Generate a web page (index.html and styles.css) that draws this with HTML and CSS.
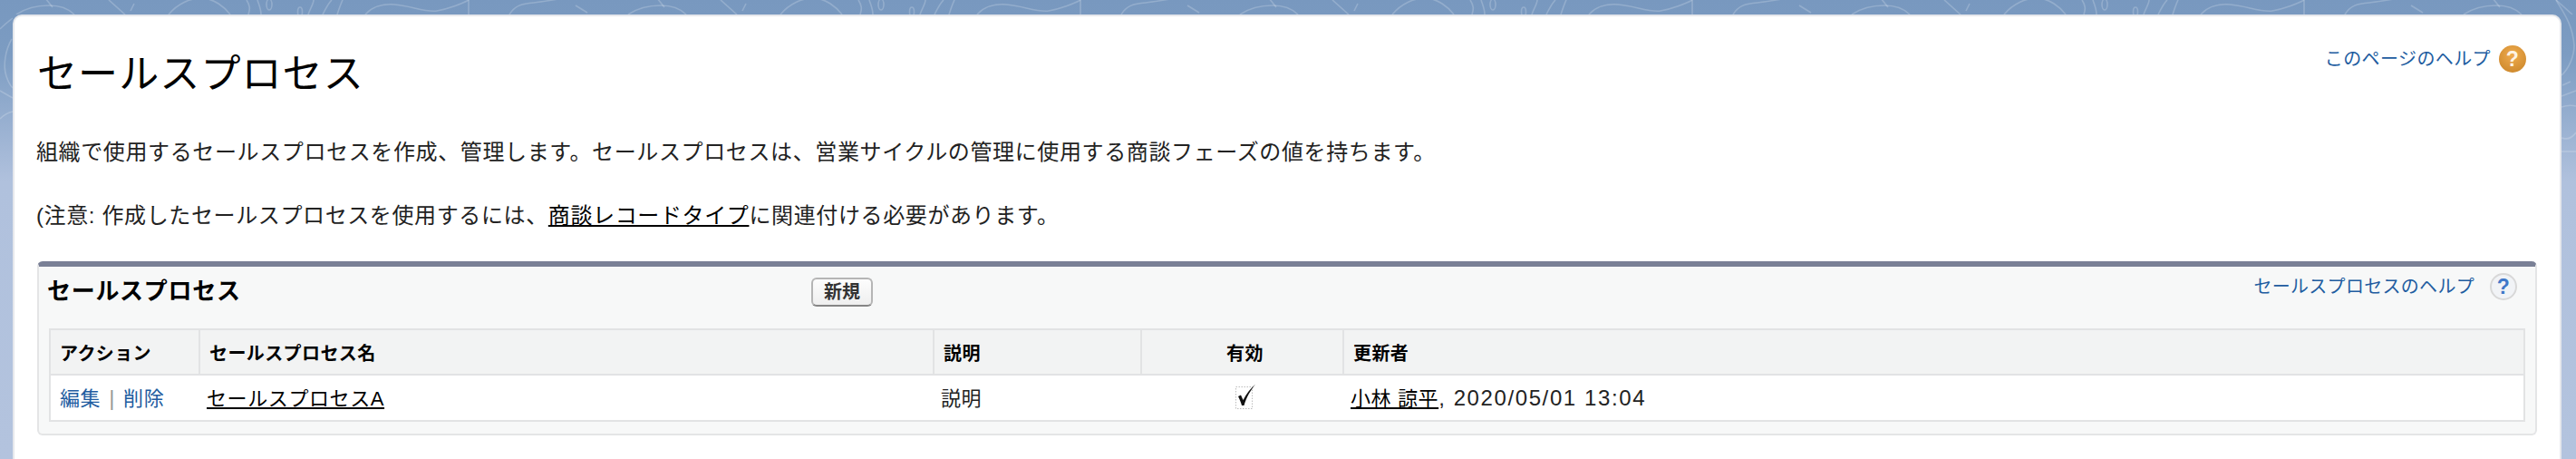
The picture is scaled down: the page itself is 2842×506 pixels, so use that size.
FILE: index.html
```html
<!DOCTYPE html>
<html lang="ja">
<head>
<meta charset="utf-8">
<title>セールスプロセス</title>
<link rel="stylesheet" href="styles.css">
</head>
<body>
<svg class="backdrop" viewBox="0 0 2842 506" aria-hidden="true">
  <defs>
    <pattern id="swirl" patternUnits="userSpaceOnUse" x="0" y="0" width="675" height="16">
      <g fill="none" stroke="#ffffff" stroke-opacity=".2" stroke-width="1.6">
        <path d="M18 16C30 8 42 6 54 6C66 6 76 10 82 16"/>
        <path d="M50 -2L58 8M120 0L138 16M148 4L144 12"/>
        <path d="M186 16C196 4 210 -2 222 -2C236 -2 248 8 254 16"/>
        <path d="M272 0C276 6 276 10 274 16M284 0C286 6 288 10 288 16"/>
        <ellipse cx="297" cy="5" rx="3" ry="6"/>
        <ellipse cx="331" cy="13" rx="2.5" ry="5"/>
        <path d="M340 16C342 10 346 4 346 0M356 16C360 8 362 4 366 0M372 16C374 10 376 4 378 0"/>
        <path d="M403 16C410 8 422 4 435 5C452 6 470 14 482 12C494 10 510 4 517 0"/>
        <path d="M517 0V16"/>
        <path d="M562 16C568 6 576 4 589 3C600 2 608 0 616 -1"/>
        <path d="M635 6L648 14"/>
      </g>
    </pattern>
  </defs>
  <rect x="0" y="0" width="2842" height="16" fill="url(#swirl)"/>
  <g fill="none" stroke="#ffffff" stroke-opacity=".2" stroke-width="1.6">
    <path d="M0 32C5 27 9 24 14 20"/>
    <path d="M13 43C6 55 3 72 7 84C9 90 11 94 14 97"/>
    <path d="M0 100L14 108"/>
    <path d="M0 131C4 127 9 124 14 123"/>
    <path d="M2820 0C2828 14 2838 26 2840 50C2840 62 2834 76 2826 83"/>
    <path d="M2827 94L2836 90"/>
    <path d="M2826 106L2842 100"/>
    <path d="M2826 118C2832 116 2838 116 2842 117"/>
    <path d="M2826 152C2832 154 2838 152 2842 146"/>
    <path d="M2826 167H2842"/>
  </g>
</svg>
<main class="card">
  <header class="page-head">
    <h1 class="page-title">セールスプロセス</h1>
    <a class="page-help">このページのヘルプ
      <svg class="help-icon" viewBox="0 0 30 30" aria-hidden="true">
        <defs>
          <radialGradient id="orange" cx="50%" cy="35%" r="65%">
            <stop offset="0" stop-color="#f0ac4e"/>
            <stop offset="1" stop-color="#cf8a2e"/>
          </radialGradient>
        </defs>
        <circle cx="15" cy="15" r="15" fill="url(#orange)"/>
        <text x="15" y="23" text-anchor="middle" class="help-mark help-mark-white">?</text>
      </svg>
    </a>
  </header>
  <p class="intro">組織で使用するセールスプロセスを作成、管理します。セールスプロセスは、営業サイクルの管理に使用する商談フェーズの値を持ちます。</p>
  <p class="note">(注意: 作成したセールスプロセスを使用するには、<a class="plain-link">商談レコードタイプ</a>に関連付ける必要があります。</p>
  <section class="panel">
    <div class="panel-head">
      <h2 class="panel-title">セールスプロセス</h2>
      <button class="btn" type="button">新規</button>
      <a class="panel-help">セールスプロセスのヘルプ
        <svg class="help-icon" viewBox="0 0 30 30" aria-hidden="true">
          <circle cx="15" cy="15" r="14" fill="#f1f3f6" stroke="#d8d8d8" stroke-width="2"/>
          <text x="15" y="23" text-anchor="middle" class="help-mark help-mark-blue">?</text>
        </svg>
      </a>
    </div>
    <table class="list">
      <colgroup>
        <col class="c-action"><col class="c-name"><col class="c-desc"><col class="c-active"><col>
      </colgroup>
      <thead>
        <tr>
          <th>アクション</th>
          <th>セールスプロセス名</th>
          <th>説明</th>
          <th class="center">有効</th>
          <th>更新者</th>
        </tr>
      </thead>
      <tbody>
        <tr>
          <td class="cell-action"><a class="action">編集</a><span class="sep">|</span><a class="action">削除</a></td>
          <td><a class="plain-link">セールスプロセスA</a></td>
          <td>説明</td>
          <td class="center">
            <svg class="check" viewBox="0 0 24 29" aria-hidden="true">
              <rect x="1.5" y="4.5" width="18" height="24" fill="none" stroke="#bdbdbd" stroke-dasharray="1.5 1.5"/>
              <path d="M4 15L7 13.5L9.5 19C13 12 18 6 23 1.5C18 8 13 16 10.5 25H8C7 21 5.5 18 4 15Z" fill="#111"/>
            </svg>
          </td>
          <td><a class="plain-link">小林 諒平</a><span class="stamp">, 2020/05/01 13:04</span></td>
        </tr>
      </tbody>
    </table>
  </section>
</main>
</body>
</html>
```

FILE: styles.css
```css
* { box-sizing: border-box; }
html, body { margin: 0; height: 506px; overflow: hidden; }
body {
  position: relative;
  padding: 16px 16px 0 14px;
  background: linear-gradient(180deg, #7898bf 0, #7c9cc2 60px, #b0c1dd 200px, #b3c3de 100%);
  font-family: "Liberation Sans", "Noto Sans CJK JP", sans-serif;
  color: #222;
}
.backdrop { position: absolute; left: 0; top: 0; width: 2842px; height: 506px; }
.card {
  position: relative;
  height: 490px;
  padding: 0 25px 0 25px;
  background: #fff;
  border: 2px solid #e6e8ec;
  border-bottom: 0;
  border-radius: 10px 10px 0 0;
}
.page-head { display: flex; justify-content: space-between; align-items: flex-start; margin-left: 0; }
.page-title {
  margin: 34px 0 0 0;
  font-size: 44px;
  line-height: 60px;
  font-weight: 400;
  letter-spacing: 1.1px;
  color: #000;
}
.page-help {
  display: flex;
  align-items: center;
  gap: 9px;
  margin: 32px 12px 0 0;
  font-size: 20px;
  line-height: 30px;
  letter-spacing: .4px;
  color: #215ca0;
}
.panel-help {
  display: flex;
  align-items: center;
  gap: 17px;
  margin: 7px 20px 0 auto;
  font-size: 20px;
  line-height: 30px;
  letter-spacing: .3px;
  color: #215ca0;
}
.help-icon { display: block; width: 30px; height: 30px; flex: none; }
.help-mark { font-family: "Liberation Sans", sans-serif; font-weight: 700; font-size: 23px; }
.help-mark-white { fill: #fdf3e4; }
.help-mark-blue { fill: #3f78c8; }
.intro, .note { margin: 0 0 0 -1px; font-size: 24px; line-height: 36px; letter-spacing: .62px; color: #222; }
.intro { margin-top: 38px; }
.note { margin-top: 34px; }
.plain-link { color: #000; text-decoration: underline; }
.panel {
  margin-top: 32px;
  height: 192px;
  background: #f7f8f8;
  border: 2px solid #e4e5e6;
  border-top: 6px solid #7a8096;
  border-radius: 6px;
}
.panel-head { display: flex; align-items: flex-start; height: 68px; padding-left: 9px; }
.panel-title {
  width: 843px;
  flex: none;
  margin: 9px 0 0;
  font-size: 26px;
  line-height: 36px;
  font-weight: 700;
  letter-spacing: .7px;
  color: #000;
}
.btn {
  margin-top: 12px;
  width: 68px;
  height: 32px;
  padding: 0;
  background: linear-gradient(180deg, #fdfdfd, #efefef);
  border: 2px solid #b5b5b5;
  border-bottom-color: #858585;
  border-radius: 6px;
  font-family: inherit;
  font-size: 20px;
  font-weight: 700;
  line-height: 26px;
  color: #333;
}
.list {
  width: 2732px;
  margin-left: 11px;
  border-collapse: collapse;
  table-layout: fixed;
  background: #fff;
  border: 2px solid #e2e3e4;
}
.c-action { width: 165px; }
.c-name { width: 810px; }
.c-desc { width: 229px; }
.c-active { width: 223px; }
.list th {
  height: 50px;
  padding: 0 0 0 10px;
  background: #f2f3f3;
  border: 2px solid #e2e3e4;
  border-width: 0 2px 2px 0;
  text-align: left;
  font-size: 20px;
  font-weight: 700;
  letter-spacing: .4px;
  color: #000;
}
.list td {
  height: 51px;
  padding: 0 0 4px 8px;
  font-size: 22px;
  letter-spacing: .6px;
  color: #222;
  vertical-align: middle;
}
.list .cell-action { padding-left: 10px; }
.list .center { text-align: center; padding-left: 6px; }
.action { color: #215ca0; }
.sep { margin: 0 9px; color: #999; font-size: 24px; }
.stamp { font-size: 24px; letter-spacing: 1.6px; }
.check { display: inline-block; width: 24px; height: 29px; vertical-align: middle; }
```
